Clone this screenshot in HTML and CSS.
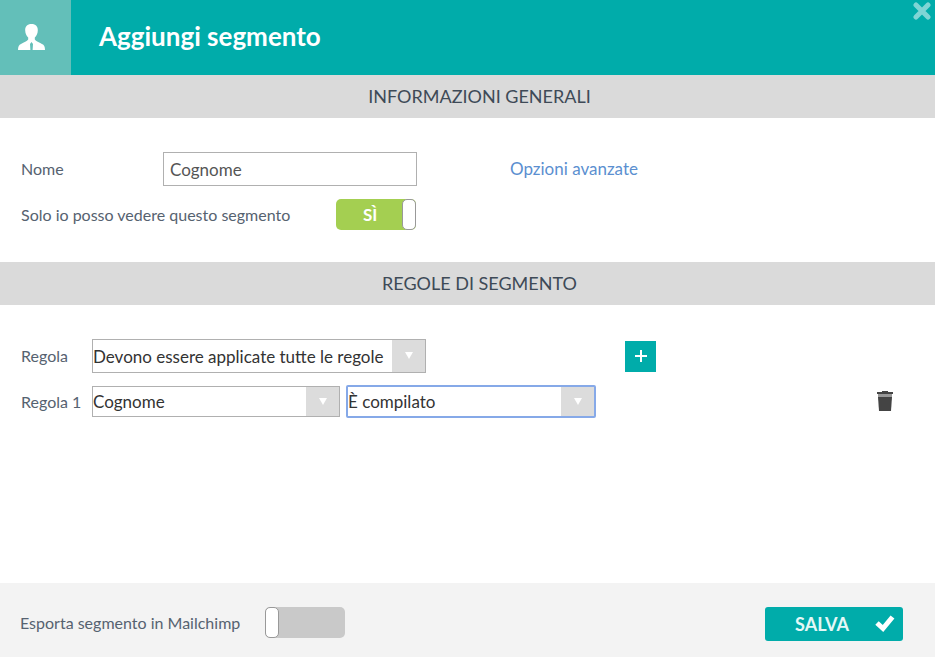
FILE: index.html
```html
<!DOCTYPE html>
<html lang="it">
<head>
    <meta charset="UTF-8">
    <meta name="viewport" content="width=device-width, initial-scale=1.0">
    <title>Aggiungi segmento</title>
    <link rel="stylesheet" href="styles.css">
</head>
<body>
    <header class="header">
        <div class="header-icon">
            <svg width="28" height="28" viewBox="0 0 28 28" fill="#fff" aria-hidden="true">
                <path d="M13.500 0c4.200 0 6.500 2.600 6.300 6.500-.1 3.200-1.300 5.400-3 7v2c1.200 1.600 4.200 2.800 7.200 4.500 2 1 3 2.500 3 6H14.600l.4-6-1.500-2-1.500 2 .4 6H0c0-3.500 1-5 3-6 3-1.700 6-2.900 7.200-4.500v-2c-1.700-1.600-2.900-3.800-3-7C7 2.600 9.300 0 13.500 0z"/>
            </svg>
        </div>
        <h1>Aggiungi segmento</h1>
        <button type="button" class="close-button" aria-label="Chiudi">
            <svg width="18" height="18" viewBox="0 0 18 18" aria-hidden="true">
                <path d="M3 3l12 12M15 3L3 15" fill="none" stroke="#7fd5d5" stroke-width="5" stroke-linecap="round"/>
            </svg>
        </button>
    </header>

    <form class="segment-form">
        <h2 class="section-title">Informazioni generali</h2>
        <section class="general">
            <div class="form-row">
                <label for="nome" class="name-label">Nome</label>
                <input type="text" id="nome" class="text-input" value="Cognome">
                <a href="#" class="advanced-link">Opzioni avanzate</a>
            </div>
            <div class="form-row">
                <label for="privato" class="private-label">Solo io posso vedere questo segmento</label>
                <span class="toggle">
                    <input type="checkbox" id="privato" checked>
                    <span class="toggle-text">SÌ</span>
                </span>
            </div>
        </section>

        <h2 class="section-title">Regole di segmento</h2>
        <section class="rules">
            <div class="form-row">
                <label for="regola" class="rule-label">Regola</label>
                <span class="select-box match-select">
                    <select id="regola">
                        <option>Devono essere applicate tutte le regole</option>
                    </select>
                </span>
                <button type="button" class="add-button" aria-label="Aggiungi regola">
                    <svg width="12" height="12" viewBox="0 0 12 12" aria-hidden="true">
                        <path d="M6 0v12M0 6h12" stroke="#fff" stroke-width="2"/>
                    </svg>
                </button>
            </div>
            <div class="form-row">
                <label for="campo" class="rule-label">Regola 1</label>
                <span class="select-box">
                    <select id="campo">
                        <option>Cognome</option>
                    </select>
                </span>
                <span class="select-box active">
                    <select aria-label="Condizione">
                        <option>È compilato</option>
                    </select>
                </span>
                <button type="button" class="delete-button" aria-label="Elimina regola">
                    <svg width="18" height="24" viewBox="0 0 18 24" aria-hidden="true">
                        <path d="M1 2h5V1h6v1h5v2H1z" fill="#444"/>
                        <path d="M2 4h14v3H2z" fill="#999"/>
                        <path d="M2 7h14l-1 14H3z" fill="#444"/>
                    </svg>
                </button>
            </div>
        </section>

        <footer class="footer">
            <label for="mailchimp" class="export-label">Esporta segmento in Mailchimp</label>
            <span class="toggle">
                <input type="checkbox" id="mailchimp">
            </span>
            <button type="submit" class="save-button">
                SALVA
                <svg width="20" height="18" viewBox="0 0 20 18" aria-hidden="true">
                    <path d="M2 8l6 5.500L17.500 2" fill="none" stroke="#fff" stroke-width="5"/>
                </svg>
            </button>
        </footer>
    </form>
</body>
</html>
```

FILE: styles.css
```css
* {
    margin: 0;
    padding: 0;
    box-sizing: border-box;
}

body {
    display: flex;
    flex-direction: column;
    min-height: 100vh;
    font-family: Lato, 'Liberation Sans', sans-serif;
    font-size: 16px;
    line-height: 20px;
    color: #566270;
    background: #fff;
}

button {
    border: none;
    background: none;
    font-family: inherit;
    cursor: pointer;
}

svg {
    display: block;
}

/* Header */
.header {
    position: relative;
    display: flex;
    align-items: center;
    height: 75px;
    background: #00acaa;
    color: #fff;
}

.header-icon {
    display: flex;
    align-items: center;
    align-self: stretch;
    width: 71px;
    padding: 0 18px;
    background: #63bfb9;
}

.header h1 {
    padding: 0 28px 4px;
    font-size: 26px;
    line-height: 28px;
    font-weight: 700;
}

.close-button {
    position: absolute;
    top: 2px;
    right: 4px;
}

/* Form */
.segment-form {
    flex: 1;
    display: flex;
    flex-direction: column;
}

.section-title {
    padding: 11px 0 12px 24px;
    background: #dadada;
    color: #3e4a57;
    font-size: 18px;
    line-height: 20px;
    font-weight: 400;
    text-align: center;
    text-transform: uppercase;
}

.general,
.rules {
    display: flex;
    flex-direction: column;
    gap: 13px;
    padding: 34px 41px 32px 21px;
}

.rules {
    flex: 1;
    gap: 12px;
}

.form-row {
    display: flex;
    align-items: center;
}

.name-label {
    width: 142px;
}

.text-input {
    width: 254px;
    height: 34px;
    padding: 0 6px;
    border: 1px solid #b0b0b0;
    color: #555;
    font-family: inherit;
    font-size: 17px;
}

.advanced-link {
    margin-left: 93px;
    color: #5b8fd0;
    font-size: 17px;
    text-decoration: none;
}

.private-label {
    width: 315px;
}

/* Toggle */
.toggle {
    position: relative;
    display: flex;
}

.toggle input {
    display: flex;
    width: 80px;
    height: 31px;
    border-radius: 5px;
    background: #c9c9c9;
    appearance: none;
    cursor: pointer;
}

.toggle input::before {
    content: "";
    width: 12px;
    border: 1px solid #999;
    border-radius: 5px;
    background: #fff;
}

.toggle input:checked {
    justify-content: flex-end;
    background: #a4cf51;
}

.toggle-text {
    position: absolute;
    top: 6px;
    left: 27px;
    color: #fff;
    font-size: 17px;
    font-weight: 700;
    pointer-events: none;
}

/* Rules */
.rule-label {
    width: 71px;
    white-space: nowrap;
}

.select-box {
    position: relative;
    width: 248px;
    height: 31px;
    margin-right: 6px;
    border: 1px solid #b0b0b0;
}

.select-box select {
    width: 100%;
    height: 100%;
    padding-right: 33px;
    border: none;
    outline: none;
    background: #fff;
    color: #333;
    font-family: inherit;
    font-size: 17px;
    appearance: none;
}

.select-box::before {
    content: "";
    position: absolute;
    top: 0;
    right: 0;
    bottom: 0;
    width: 33px;
    background: #dcdcdc;
    pointer-events: none;
}

.select-box::after {
    content: "";
    position: absolute;
    top: 50%;
    right: 12px;
    margin-top: -4px;
    border: 4px solid transparent;
    border-top: 7px solid #fff;
    border-bottom: none;
    pointer-events: none;
}

.match-select {
    width: 334px;
    height: 34px;
}

.select-box.active {
    width: 250px;
    height: 33px;
    border: 2px solid #86a9e8;
    border-radius: 2px;
}

.add-button {
    display: flex;
    align-items: center;
    justify-content: center;
    width: 31px;
    height: 31px;
    margin-left: 193px;
    background: #00acaa;
}

.delete-button {
    margin-left: auto;
}

/* Footer */
.footer {
    display: flex;
    align-items: flex-start;
    padding: 24px 32px 16px 20px;
    background: #f3f3f3;
}

.export-label {
    width: 245px;
    line-height: 32px;
}

.save-button {
    display: flex;
    align-items: center;
    gap: 26px;
    height: 34px;
    margin-left: auto;
    padding: 0 8px 0 30px;
    border-radius: 3px;
    background: #00acaa;
    color: #e4f8f7;
    font-size: 18px;
    font-weight: 700;
}
```
